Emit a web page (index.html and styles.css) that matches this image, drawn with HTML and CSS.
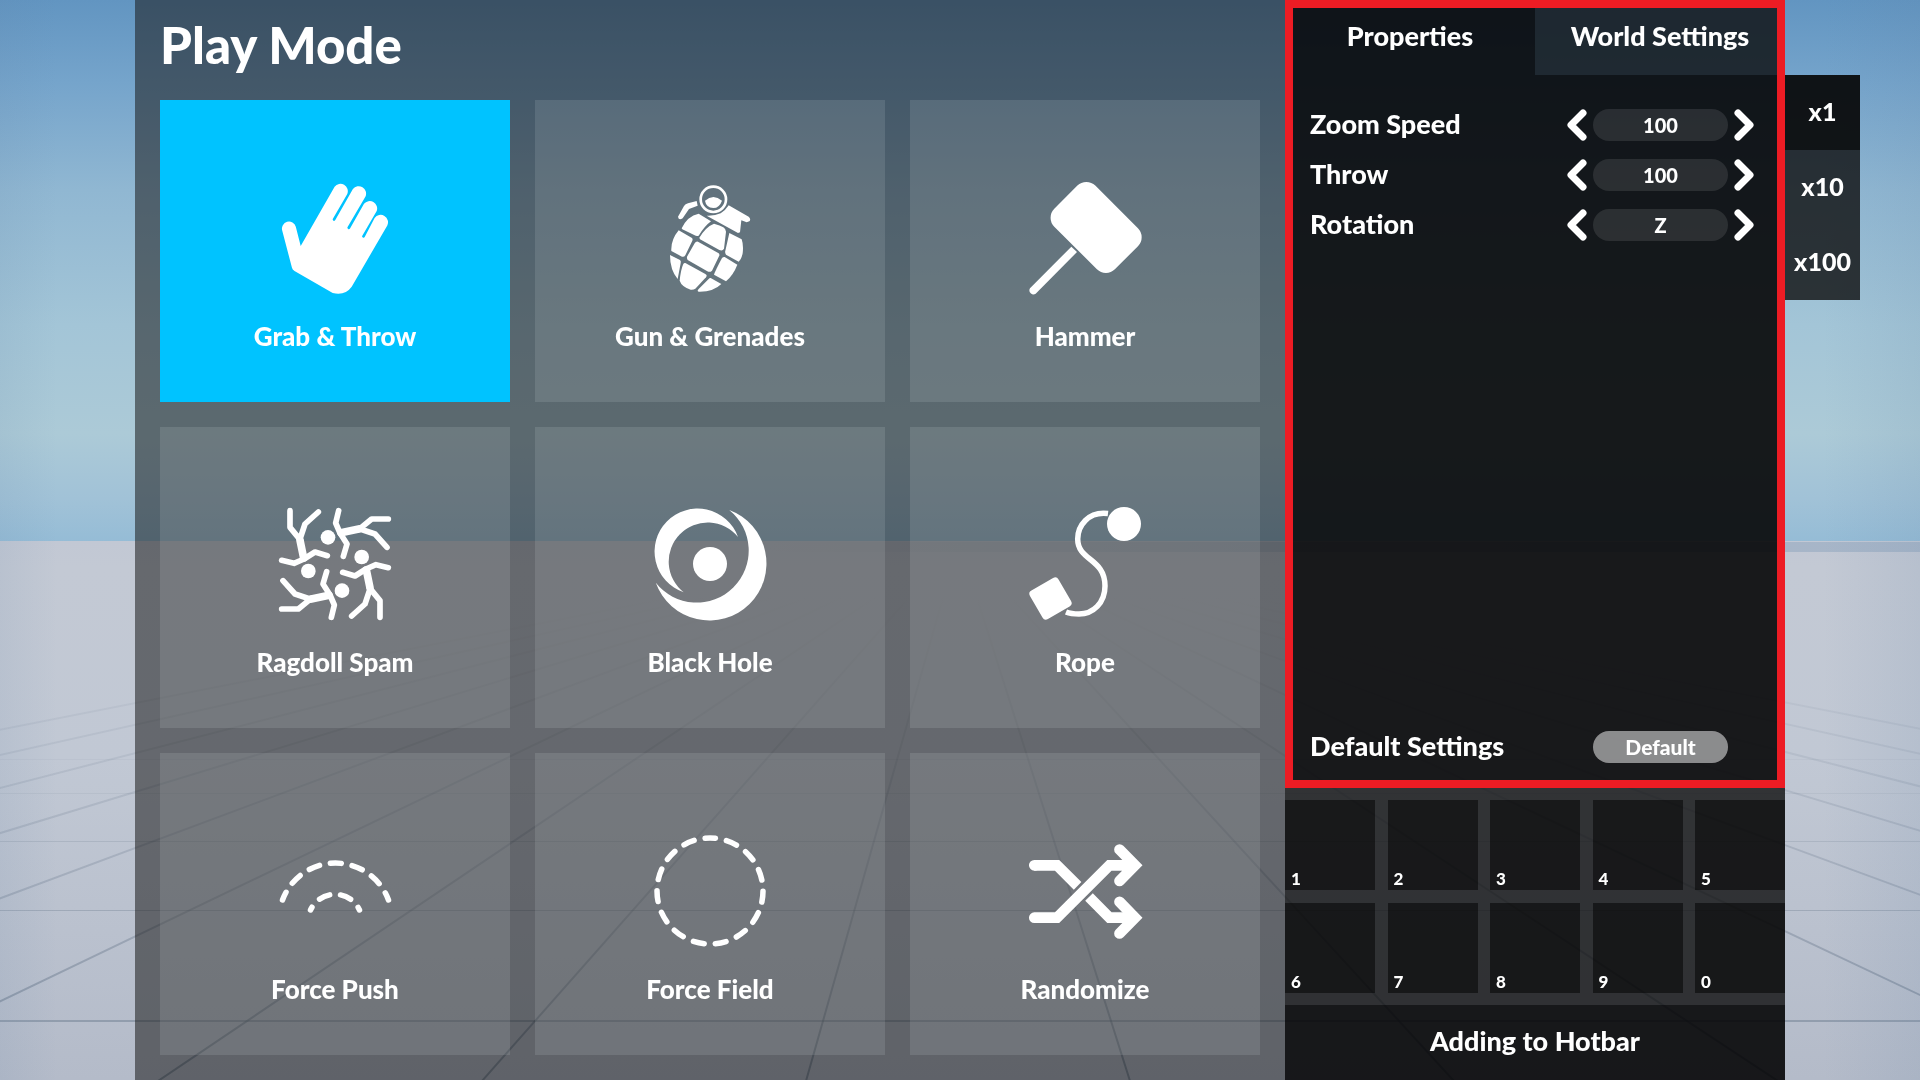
FILE: index.html
```html
<!DOCTYPE html>
<html lang="en">
<head>
<meta charset="utf-8">
<title>Play Mode</title>
<link rel="stylesheet" href="styles.css">
</head>
<body>
<svg class="scene" viewBox="0 0 1920 1080" preserveAspectRatio="none" aria-hidden="true">
  <defs>
    <linearGradient id="sky" x1="0" y1="0" x2="0" y2="1">
      <stop offset="0" stop-color="#6295c1"/>
      <stop offset=".15" stop-color="#75a4cb"/>
      <stop offset=".35" stop-color="#90b7d2"/>
      <stop offset=".6" stop-color="#a3c5d7"/>
      <stop offset=".8" stop-color="#accad7"/>
      <stop offset=".92" stop-color="#a1c2d7"/>
      <stop offset="1" stop-color="#95bcd6"/>
    </linearGradient>
    <linearGradient id="ground" x1="0" y1="0" x2="0" y2="1">
      <stop offset="0" stop-color="#c2c8d4"/>
      <stop offset=".05" stop-color="#c3c9d4"/>
      <stop offset=".4" stop-color="#c1c8d4"/>
      <stop offset="1" stop-color="#b4bbc9"/>
    </linearGradient>
    <linearGradient id="fade" gradientUnits="userSpaceOnUse" x1="0" y1="541" x2="0" y2="1080">
      <stop offset=".1" stop-color="#5b6b80" stop-opacity="0"/>
      <stop offset=".4" stop-color="#5b6b80" stop-opacity=".12"/>
      <stop offset=".7" stop-color="#5b6b80" stop-opacity=".3"/>
      <stop offset="1" stop-color="#4c6075" stop-opacity=".5"/>
    </linearGradient>
    <linearGradient id="hills" x1="0" y1="0" x2="1" y2="0">
      <stop offset=".4" stop-color="#a0b1c5" stop-opacity="0"/>
      <stop offset=".8" stop-color="#a0b1c5" stop-opacity=".8"/>
    </linearGradient>
    <linearGradient id="edges" x1="0" y1="0" x2="1" y2="0">
      <stop offset="0" stop-color="#5d7da0" stop-opacity=".1"/>
      <stop offset=".03" stop-color="#5d7da0" stop-opacity="0"/>
      <stop offset=".95" stop-color="#5d7da0" stop-opacity="0"/>
      <stop offset="1" stop-color="#5d7da0" stop-opacity=".12"/>
    </linearGradient>
  </defs>
  <rect width="1920" height="542" fill="url(#sky)"/>
  <rect y="541" width="1920" height="539" fill="url(#ground)"/>
  <rect y="542" width="1920" height="10" fill="url(#hills)"/>
  <g fill="none" stroke="url(#fade)" stroke-width="2">
    <path d="M959 541L789 1141M959 541L429 1141M959 541L69 1141M959 541L-291 1141M959 541L-651 1141M959 541L-1011 1141M959 541L-1371 1141M959 541L-1731 1141M959 541L-2091 1141"/>
    <path d="M959 541L1149 1141M959 541L1509 1141M959 541L1869 1141M959 541L2229 1141M959 541L2589 1141M959 541L2949 1141M959 541L3309 1141M959 541L3669 1141M959 541L4029 1141"/>
  </g>
  <g fill="#4c6075">
    <rect y="1020" width="1920" height="2" opacity=".35"/>
    <rect y="910" width="1920" height="1" opacity=".25"/>
    <rect y="841" width="1920" height="1" opacity=".15"/>
    <rect y="793" width="1920" height="1" opacity=".08"/>
    <rect y="759" width="1920" height="1" opacity=".05"/>
  </g>
  <rect width="1920" height="1080" fill="url(#edges)"/>
</svg>

<div class="screen">
  <main class="modes">
    <h1 class="modes-title">Play Mode</h1>
    <div class="mode-grid">
      <button class="mode mode-active" type="button">
        <svg class="mode-icon" viewBox="0 0 112 112"><path d="M21.7 64L55.6 4.7A7.4 7.4 0 0 1 68.3 12L53.9 36.8A1.3 1.3 0 0 0 56.3 38.1L73.9 7A7.4 7.4 0 0 1 86.5 14.5L68.6 45A1.3 1.3 0 0 0 71 46.4L85 21.8A7.4 7.4 0 0 1 97.7 29L83.3 53.7A1.3 1.3 0 0 0 85.7 55L95.6 36A7.4 7.4 0 0 1 108.3 43.5L72.7 104.7Q66 114 53.7 111L15.5 89Q13.3 87.5 12.9 85.5L3.2 48.5A7 7 0 0 1 16.8 44.7Z"/></svg>
        <span class="mode-name">Grab &amp; Throw</span>
      </button>
      <button class="mode" type="button">
        <svg class="mode-icon" viewBox="162 66 336 336">
          <circle cx="340" cy="118" r="38" fill="none" stroke="#fff" stroke-width="8"/>
          <path d="M315 122Q340 100 366 122Q358 144 340 144Q318 142 315 122Z"/>
          <path d="M234 170L252 138Q256 132 264 130L290 123L293 137L267 147L248 175Q236 182 234 170Z"/>
          <path d="M386 136L446 170Q454 178 448 184L440 187L424 181L420 217L414 219L320 167Q345 168 362 160Q376 152 386 136Z"/>
          <path d="M245 205Q262 168 296 161L333 184Q314 198 296 227Q290 230 284 226L247 208Z"/>
          <path d="M298 233Q318 200 342 191Q380 200 378 215L372 266Q368 274 358 270L300 238Z"/>
          <path d="M388 219L425 238Q431 255 428 280Q424 298 416 305L378 284Q374 278 376 272Z"/>
          <path d="M236 211L276 234Q279 238 277 242L256 286Q252 292 246 290L214 273Q212 240 236 211Z"/>
          <path d="M294 245L356 280Q360 284 357 289L336 332Q330 338 322 334L263 300Q260 296 261 290L284 250Q288 243 294 245Z"/>
          <path d="M374 291L412 314Q400 345 378 364L342 344Q344 336 366 294Q370 290 374 291Z"/>
          <path d="M210 285L240 300Q244 304 242 310L233 357Q210 330 210 285Z"/>
          <path d="M256 309L316 342Q323 346 318 352L286 386Q280 390 272 389Q245 380 239 362Q242 330 250 312Q252 308 256 309Z"/>
          <path d="M332 354L364 372Q340 396 296 395Q290 393 296 387L326 357Q329 353 332 354Z"/>
        </svg>
        <span class="mode-name">Gun &amp; Grenades</span>
      </button>
      <button class="mode" type="button">
        <svg class="mode-icon" viewBox="147 66 336 336"><rect x="220" y="115" width="257" height="174" rx="38" transform="rotate(45 348 202)"/><path d="M274 260L291 276L167 401A12 12 0 0 1 150 385Z"/></svg>
        <span class="mode-name">Hammer</span>
      </button>
      <button class="mode" type="button">
        <svg class="mode-icon" viewBox="87 57 336 336">
          <defs>
            <g id="ragdoll">
              <circle cx="335" cy="204" r="22"/>
              <path d="M278 250L315 261L348 240L378 227L415 236M360 300L345 345L305 381M358 296L390 335V385" fill="none" stroke="#fff" stroke-width="17" stroke-linecap="round" stroke-linejoin="round"/>
              <path d="M349 243L360 296" fill="none" stroke="#fff" stroke-width="23" stroke-linecap="round"/>
            </g>
          </defs>
          <use href="#ragdoll"/>
          <use href="#ragdoll" transform="rotate(90 255 225)"/>
          <use href="#ragdoll" transform="rotate(180 255 225)"/>
          <use href="#ragdoll" transform="rotate(270 255 225)"/>
        </svg>
        <span class="mode-name">Ragdoll Spam</span>
      </button>
      <button class="mode" type="button">
        <svg class="mode-icon" viewBox="0 0 112 112"><circle cx="56" cy="56" r="17"/><path d="M84 29A43 43 0 1 0 29.7 84.3A39 39 0 1 1 84 29Z"/><path d="M75.2 2A57 57 0 1 1 1.8 74.7A52 52 0 1 0 75.2 2Z"/></svg>
        <span class="mode-name">Black Hole</span>
      </button>
      <button class="mode" type="button">
        <svg class="mode-icon" viewBox="0 0 112 112"><circle cx="95" cy="16" r="17"/><path d="M79 5.5C59 3 48.7 18 48.7 31C48.7 53 76 50 76 78C76 95 64 106 50 106Q42 106 37 104" fill="none" stroke="#fff" stroke-width="5.5"/><rect x="5" y="74" width="33" height="33" rx="4" transform="rotate(-30 21.5 90.5)"/></svg>
        <span class="mode-name">Rope</span>
      </button>
      <button class="mode" type="button">
        <svg class="mode-icon" viewBox="0 0 112 112"><g fill="none" stroke="#fff" stroke-width="5.5" stroke-linecap="round"><path d="M3.5 65A56.5 56.5 0 0 1 109.5 65" stroke-dasharray="11 11" stroke-dashoffset="2.5"/><path d="M31.5 75A27 27 0 0 1 80.5 75" stroke-dasharray="11 11" stroke-dashoffset="7.8"/></g></svg>
        <span class="mode-name">Force Push</span>
      </button>
      <button class="mode" type="button">
        <svg class="mode-icon" viewBox="0 0 112 112"><path d="M56 3A53 53 0 0 1 56 109A53 53 0 0 1 56 3" fill="none" stroke="#fff" stroke-width="5.5" stroke-linecap="round" stroke-dasharray="11 11.2" stroke-dashoffset="5.5"/></svg>
        <span class="mode-name">Force Field</span>
      </button>
      <button class="mode" type="button">
        <svg class="mode-icon" viewBox="0 0 112 112"><g fill="none" stroke="#fff" stroke-width="10.7"><path d="M5.3 30.3H28L48.6 50.9M60 62.1L80.5 82.7H104"/><path d="M5.3 30.3H6M5.3 82.7H28L80.5 30.3H104M90.5 14.5L106 30.3L90.5 46M90.5 66.8L106 82.7L90.5 98.4" stroke-linecap="round"/></g></svg>
        <span class="mode-name">Randomize</span>
      </button>
    </div>
  </main>

  <aside class="side">
    <section class="panel">
      <div class="tabs" role="tablist">
        <button class="tab tab-active" type="button" role="tab" aria-selected="true">Properties</button>
        <button class="tab" type="button" role="tab" aria-selected="false">World Settings</button>
      </div>
      <div class="settings">
        <div class="setting">
          <label class="setting-name" for="zoom-speed">Zoom Speed</label>
          <button class="step" type="button" aria-label="Decrease zoom speed"><svg class="chevron" viewBox="0 0 20 32"><path d="M16 4L4 16L16 28"/></svg></button>
          <input class="value" id="zoom-speed" type="text" value="100">
          <button class="step" type="button" aria-label="Increase zoom speed"><svg class="chevron" viewBox="0 0 20 32"><path d="M4 4L16 16L4 28"/></svg></button>
        </div>
        <div class="setting">
          <label class="setting-name" for="throw">Throw</label>
          <button class="step" type="button" aria-label="Decrease throw"><svg class="chevron" viewBox="0 0 20 32"><path d="M16 4L4 16L16 28"/></svg></button>
          <input class="value" id="throw" type="text" value="100">
          <button class="step" type="button" aria-label="Increase throw"><svg class="chevron" viewBox="0 0 20 32"><path d="M4 4L16 16L4 28"/></svg></button>
        </div>
        <div class="setting">
          <label class="setting-name" for="rotation">Rotation</label>
          <button class="step" type="button" aria-label="Previous axis"><svg class="chevron" viewBox="0 0 20 32"><path d="M16 4L4 16L16 28"/></svg></button>
          <input class="value" id="rotation" type="text" value="Z">
          <button class="step" type="button" aria-label="Next axis"><svg class="chevron" viewBox="0 0 20 32"><path d="M4 4L16 16L4 28"/></svg></button>
        </div>
      </div>
      <div class="setting setting-reset">
        <span class="setting-name">Default Settings</span>
        <button class="reset" type="button">Default</button>
      </div>
    </section>
    <div class="hotbar">
      <button class="slot" type="button">1</button>
      <button class="slot" type="button">2</button>
      <button class="slot" type="button">3</button>
      <button class="slot" type="button">4</button>
      <button class="slot" type="button">5</button>
      <button class="slot" type="button">6</button>
      <button class="slot" type="button">7</button>
      <button class="slot" type="button">8</button>
      <button class="slot" type="button">9</button>
      <button class="slot" type="button">0</button>
    </div>
    <button class="add" type="button">Adding to Hotbar</button>
  </aside>

  <div class="multipliers">
    <button class="multiplier multiplier-active" type="button">x1</button>
    <button class="multiplier" type="button">x10</button>
    <button class="multiplier" type="button">x100</button>
  </div>
</div>
</body>
</html>
```
FILE: styles.css
```css
* {
  box-sizing: border-box;
}

body {
  margin: 0;
  background: #b8bfcd;
  color: #fff;
  font-family: Lato, "Open Sans", sans-serif;
  font-size: 26px;
  font-weight: 900;
  line-height: 30px;
}

button,
input {
  margin: 0;
  padding: 0;
  border: 0;
  background: none;
  color: inherit;
  font: inherit;
}

.scene {
  position: fixed;
  inset: 0;
  z-index: -1;
  width: 100%;
  height: 100%;
}

.screen {
  display: flex;
  min-height: 100vh;
  padding: 0 60px 0 135px;
}

/* Mode picker */
.modes {
  display: flex;
  flex: 1;
  flex-direction: column;
  padding: 0 25px 25px;
  background: rgba(25, 26, 26, 0.55);
}

.modes-title {
  margin: 0;
  padding: 15px 0 25px;
  font-size: 51px;
  font-weight: 900;
  line-height: 60px;
}

.mode-grid {
  display: grid;
  flex: 1;
  grid-template-columns: repeat(3, 1fr);
  grid-template-rows: repeat(3, 1fr);
  gap: 25px;
}

.mode {
  display: flex;
  flex-direction: column;
  align-items: center;
  justify-content: center;
  gap: 27px;
  padding-top: 31px;
  background: rgba(250, 255, 255, 0.11);
}

.mode-active {
  background: #00c3ff;
}

.mode-icon {
  width: 112px;
  height: 112px;
  overflow: visible;
  fill: #fff;
}

/* Properties column */
.side {
  display: flex;
  flex-direction: column;
  width: 500px;
  font-size: 27px;
}

.panel {
  display: flex;
  flex: 1;
  flex-direction: column;
  padding-bottom: 16px;
  background: rgba(6, 6, 7, 0.9);
  outline: 8px solid #ed1c24;
  outline-offset: -8px;
}

.tabs {
  display: grid;
  grid-template-columns: 1fr 1fr;
}

.tab {
  height: 75px;
  padding-bottom: 3px;
  background: rgba(120, 160, 190, 0.14);
}

.tab-active {
  background: none;
}

.settings {
  flex: 1;
  padding-top: 25px;
}

.setting {
  display: flex;
  align-items: center;
  gap: 6px;
  height: 50px;
  padding: 0 31px 0 25px;
}

.setting-reset {
  padding-right: 57px;
}

.setting-name {
  flex: 1;
  padding-bottom: 3px;
}

.step {
  display: flex;
}

.chevron {
  width: 20px;
  height: 32px;
  fill: none;
  stroke: #fff;
  stroke-width: 7;
  stroke-linecap: round;
  stroke-linejoin: round;
}

.value,
.reset {
  width: 135px;
  height: 32px;
  border-radius: 16px;
  text-align: center;
}

.value {
  background: rgba(255, 255, 255, 0.1);
  font-size: 20px;
}

.reset {
  padding-bottom: 1px;
  background: rgba(255, 255, 255, 0.5);
  font-size: 21px;
}

/* Hotbar */
.hotbar {
  display: grid;
  grid-template-columns: repeat(5, 90px);
  justify-content: space-between;
  row-gap: 13px;
  padding: 12px 0;
  background: rgba(14, 14, 14, 0.8);
}

.slot {
  display: flex;
  align-items: flex-end;
  height: 90px;
  padding: 0 6px 1px;
  background: rgba(0, 0, 0, 0.5);
  font-size: 17px;
  line-height: 20px;
}

.add {
  height: 75px;
  padding-bottom: 3px;
  background: rgba(6, 6, 7, 0.9);
}

/* Step multipliers */
.multipliers {
  display: flex;
  flex-direction: column;
  align-self: flex-start;
  width: 75px;
  margin-top: 75px;
  font-size: 25px;
}

.multiplier {
  height: 75px;
  padding-bottom: 3px;
  background: rgba(14, 14, 14, 0.8);
}

.multiplier-active {
  background: rgba(6, 6, 7, 0.92);
}
```
